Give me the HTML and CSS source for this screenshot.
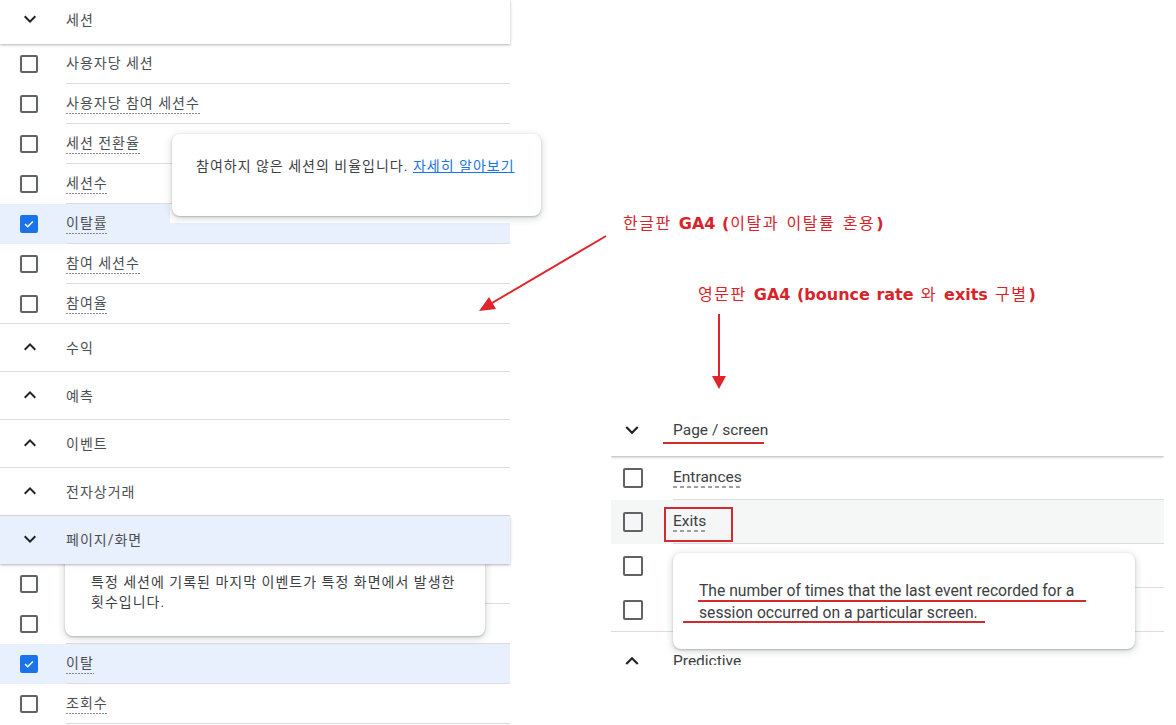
FILE: index.html
```html
<!DOCTYPE html>
<html lang="ko">
<head>
<meta charset="utf-8">
<title>GA4 측정항목 비교</title>
<link rel="stylesheet" href="styles.css">
</head>
<body>
<div class="page">

  <section class="panel panel-ko">
    <div class="group-head top">
      <svg class="chev" viewBox="0 0 24 24"><path d="M16.59 8.59L12 13.17 7.41 8.59 6 10l6 6 6-6z"/></svg>
      <span class="head-label">세션</span>
    </div>
    <div class="metric"><span class="cbw"><span class="cb"></span></span><div class="cell"><span class="lbl plain">사용자당 세션</span></div></div>
    <div class="metric"><span class="cbw"><span class="cb"></span></span><div class="cell"><span class="lbl">사용자당 참여 세션수</span></div></div>
    <div class="metric"><span class="cbw"><span class="cb"></span></span><div class="cell"><span class="lbl">세션 전환율</span></div></div>
    <div class="metric"><span class="cbw"><span class="cb"></span></span><div class="cell"><span class="lbl">세션수</span></div></div>
    <div class="metric selected"><span class="cbw"><span class="cb on"><svg viewBox="0 0 18 18"><path d="M4 9.2l3.3 3.3L14 5.8"/></svg></span></span><div class="cell"><span class="lbl">이탈률</span></div></div>
    <div class="metric"><span class="cbw"><span class="cb"></span></span><div class="cell"><span class="lbl">참여 세션수</span></div></div>
    <div class="metric last"><span class="cbw"><span class="cb"></span></span><div class="cell"><span class="lbl">참여율</span></div></div>

    <div class="section"><svg class="chev" viewBox="0 0 24 24"><path d="M12 8l-6 6 1.41 1.41L12 10.83l4.59 4.58L18 14z"/></svg><span class="head-label">수익</span></div>
    <div class="section"><svg class="chev" viewBox="0 0 24 24"><path d="M12 8l-6 6 1.41 1.41L12 10.83l4.59 4.58L18 14z"/></svg><span class="head-label">예측</span></div>
    <div class="section"><svg class="chev" viewBox="0 0 24 24"><path d="M12 8l-6 6 1.41 1.41L12 10.83l4.59 4.58L18 14z"/></svg><span class="head-label">이벤트</span></div>
    <div class="section"><svg class="chev" viewBox="0 0 24 24"><path d="M12 8l-6 6 1.41 1.41L12 10.83l4.59 4.58L18 14z"/></svg><span class="head-label">전자상거래</span></div>
    <div class="section open"><svg class="chev" viewBox="0 0 24 24"><path d="M16.59 8.59L12 13.17 7.41 8.59 6 10l6 6 6-6z"/></svg><span class="head-label">페이지/화면</span></div>

    <div class="metric"><span class="cbw"><span class="cb"></span></span><div class="cell"></div></div>
    <div class="metric"><span class="cbw"><span class="cb"></span></span><div class="cell"></div></div>
    <div class="metric selected"><span class="cbw"><span class="cb on"><svg viewBox="0 0 18 18"><path d="M4 9.2l3.3 3.3L14 5.8"/></svg></span></span><div class="cell"><span class="lbl">이탈</span></div></div>
    <div class="metric"><span class="cbw"><span class="cb"></span></span><div class="cell"><span class="lbl">조회수</span></div></div>
  </section>

  <section class="panel panel-en">
    <div class="group-head en">
      <svg class="chev" viewBox="0 0 24 24"><path d="M16.59 8.59L12 13.17 7.41 8.59 6 10l6 6 6-6z"/></svg>
      <span class="head-label marked">Page / screen</span>
    </div>
    <div class="metric"><span class="cbw"><span class="cb"></span></span><div class="cell"><span class="lbl">Entrances</span></div></div>
    <div class="metric hover"><span class="cbw"><span class="cb"></span></span><div class="cell"><span class="lbl boxed">Exits</span></div></div>
    <div class="metric"><span class="cbw"><span class="cb"></span></span><div class="cell"></div></div>
    <div class="metric last"><span class="cbw"><span class="cb"></span></span><div class="cell"></div></div>
    <div class="section"><svg class="chev" viewBox="0 0 24 24"><path d="M12 8l-6 6 1.41 1.41L12 10.83l4.59 4.58L18 14z"/></svg><span class="head-label">Predictive</span></div>
  </section>

  <div class="patch"></div>

  <div class="tip tip-bounce">참여하지 않은 세션의 비율입니다. <a href="#" class="link">자세히 알아보기</a></div>
  <div class="tip tip-exit-ko">특정 세션에 기록된 마지막 이벤트가 특정 화면에서 발생한 횟수입니다.</div>
  <div class="tip tip-exit-en">The number of times that the last event recorded for a<br>session occurred on a particular screen.<span class="mark m1"></span><span class="mark m2"></span></div>

  <svg class="arrows" viewBox="0 0 1176 725">
    <line x1="606" y1="236" x2="492" y2="303"/>
    <polygon points="479,311 496,309 489,297"/>
    <line x1="719" y1="314" x2="719" y2="377"/>
    <polygon points="712,376 726,376 719,389"/>
  </svg>

  <div class="note note-ko"><span class="k">한글판</span> <b>GA4 (</b><span class="k">이탈과 이탈률 혼용</span><b>)</b></div>
  <div class="note note-en"><span class="k">영문판</span> <b>GA4 (bounce rate</b> <span class="k">와</span> <b>exits</b> <span class="k">구별</span><b>)</b></div>
</div>
</body>
</html>
```
FILE: styles.css
```css
* { box-sizing: border-box; }
*::before, *::after { box-sizing: border-box; }
html, body { margin: 0; padding: 0; }
body {
  width: 1176px;
  height: 725px;
  overflow: hidden;
  background: #fff;
  font-family: Roboto, "Noto Sans CJK KR", sans-serif;
  color: #3c4043;
}
.page { position: relative; display: flex; align-items: flex-start; width: 1176px; height: 725px; }

/* ---------- shared list parts ---------- */
.panel { flex: none; background: #fff; }
.chev { width: 24px; height: 24px; fill: #202124; flex: none; }
.group-head, .section { display: flex; align-items: center; position: relative; }
.metric { display: flex; height: 40px; }
.cbw { display: flex; align-items: center; flex: none; }
.cb {
  width: 18px; height: 18px;
  border: 2px solid #5f6368; border-radius: 2px;
  display: block;
}
.cb.on { background: #1a73e8; border-color: #1a73e8; }
.cb.on svg { display: block; width: 14px; height: 14px; }
.cb.on path { fill: none; stroke: #fff; stroke-width: 2; }
.cell { flex: 1; display: flex; align-items: center; border-bottom: 1px solid #dadce0; }
.metric.last .cell { border-bottom: 0; }
.metric.last { border-bottom: 1px solid #dadce0; }
.metric.selected { background: #e8f0fe; }
.lbl {
  display: inline-block;
  line-height: 18px;
  padding-bottom: 2px;
  background-image: linear-gradient(to right, #80868b 2px, transparent 2px);
  background-size: 3px 1px;
  background-repeat: repeat-x;
  background-position: left bottom;
  position: relative;
}
.lbl.plain { background: none; }

/* ---------- Korean panel ---------- */
.panel-ko { width: 510px; font-size: 14px; letter-spacing: 1px; color: #4a4e52; }
.panel-ko .group-head.top {
  height: 44px; padding-bottom: 6px;
  box-shadow: 0 1px 2px rgba(60,64,67,.3), 0 1px 4px rgba(60,64,67,.12);
  z-index: 1;
}
.panel-ko .chev { margin-left: 18px; margin-right: 24px; }
.panel-ko .cbw { width: 66px; padding-left: 20px; }
.panel-ko .section { height: 48px; border-bottom: 1px solid #dadce0; padding-bottom: 2px; }
.panel-ko .section.open {
  background: #e8f0fe; border-bottom: 0;
  box-shadow: 0 1px 2px rgba(60,64,67,.3), 0 1px 4px rgba(60,64,67,.12);
  z-index: 1;
}

/* ---------- English panel ---------- */
.panel-en {
  width: 553px; height: 262px; overflow: hidden;
  margin-left: 101px; margin-top: 403px;
  font-size: 15.5px;
}
.panel-en .chev { width: 26px; height: 26px; margin-left: 8px; margin-right: 28px; }
.panel-en .group-head { height: 53px; box-shadow: 0 1px 2px rgba(60,64,67,.3), 0 1px 4px rgba(60,64,67,.12); z-index: 1; }
.panel-en .metric { height: 44px; }
.panel-en .metric.hover { background: #f5f6f6; }
.panel-en .cbw { width: 62px; padding-left: 12px; }
.panel-en .cb { width: 20px; height: 20px; }
.panel-en .lbl {
  background-image: linear-gradient(to right, #9aa0a6 4px, transparent 4px);
  background-size: 7px 2px;
}
.panel-en .section { height: 57px; }

/* annotation marks inside English panel */
.marked { position: relative; }
.marked::after {
  content: ""; position: absolute;
  left: -10px; width: 101px; top: 21px; height: 2px;
  background: #d32a30;
}
.boxed::after {
  content: ""; position: absolute;
  left: -9px; top: -5px; width: 69px; height: 35px;
  border: 2px solid #d32a30;
}

/* ---------- tooltips ---------- */
.patch { position: absolute; left: 170px; top: 204px; width: 340px; height: 19px; background: #fff; }
.tip {
  position: absolute;
  background: #fff;
  border-radius: 8px;
  box-shadow: 0 1px 2px rgba(60,64,67,.3), 0 2px 6px 2px rgba(60,64,67,.15);
  font-size: 14px;
  color: #3c4043;
}
.tip-bounce { left: 172px; top: 134px; width: 369px; height: 82px; padding: 22px 24px; line-height: 21px; letter-spacing: 1px; }
.link { color: #1a73e8; text-decoration: underline; }
.tip-exit-ko { left: 65px; top: 548px; width: 420px; height: 88px; padding: 24px 26px; line-height: 20px; letter-spacing: 1px; }
.tip-exit-en { left: 673px; top: 553px; width: 462px; height: 96px; padding: 27px 26px; line-height: 22px; font-size: 15.7px; }
.mark { position: absolute; height: 2px; background: #d32a30; }
.m1 { left: 25px; width: 388px; top: 47px; }
.m2 { left: 10px; width: 302px; top: 68px; }

/* ---------- annotations ---------- */
.arrows { position: absolute; left: 0; top: 0; width: 1176px; height: 725px; pointer-events: none; }
.arrows line { stroke: #e0242b; stroke-width: 2; }
.arrows polygon { fill: #e0242b; }
.note {
  position: absolute;
  font-family: "DejaVu Sans", "Noto Sans CJK KR", sans-serif;
  font-size: 16px; line-height: 20px;
  color: #d8232a; white-space: nowrap;
  word-spacing: 1px;
}
.note .k { letter-spacing: 1.5px; margin: 0 1px; }
.note b { font-weight: bold; }
.note-ko { left: 622px; top: 214px; }
.note-en { left: 697px; top: 285px; }
```
